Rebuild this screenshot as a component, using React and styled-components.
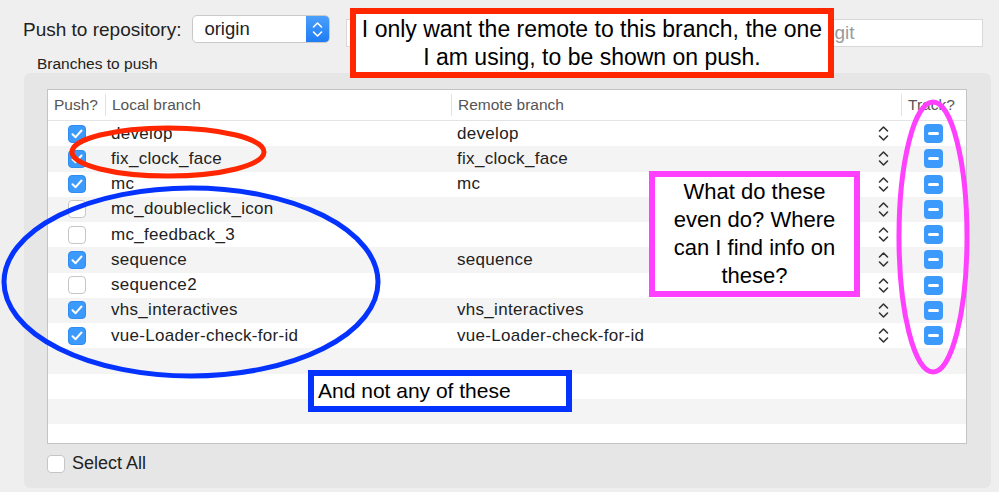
import React from 'react'
import styled, { createGlobalStyle } from 'styled-components'

const Global = createGlobalStyle`
  html, body {
    margin: 0;
    padding: 0;
    background: #efefef;
  }
  body {
    font-family: "Liberation Sans", Arial, sans-serif;
    color: #222;
  }
`

const Window = styled.div`
  position: relative;
  width: 999px;
  height: 492px;
  overflow: hidden;
  background: #efefef;
  padding: 15px 16px 0 23px;
  box-sizing: border-box;
`

const TopRow = styled.div`
  display: flex;
  align-items: flex-start;
  height: 31px;
`

const Label = styled.div`
  font-size: 19px;
  line-height: 30px;
  color: #222;
  margin-right: 11px;
`

const Popup = styled.div`
  display: flex;
  width: 138px;
  height: 28px;
  box-sizing: border-box;
  border: 1px solid #c9c9c9;
  border-radius: 5px;
  background: #fff;
  overflow: hidden;
`

const PopupText = styled.div`
  flex: 1;
  font-size: 18.5px;
  padding-left: 11px;
  line-height: 26px;
`

const PopupArrows = styled.div`
  width: 23px;
  background: linear-gradient(#4aa0fb, #1f7cf4);
  display: flex;
  align-items: center;
  justify-content: center;
`

const TextField = styled.div`
  flex: 1;
  height: 28px;
  margin-left: 16px;
  margin-top: 4px;
  box-sizing: border-box;
  border: 1px solid #d8d8d8;
  background: #fff;
  font-size: 19px;
  color: #9a9a9a;
  padding-left: 487px;
  line-height: 26px;
`

const GroupTitle = styled.div`
  font-size: 15.5px;
  margin: 10px 0 0 14px;
  height: 17px;
  line-height: 16px;
`

const Group = styled.div`
  margin-left: 1px;
  width: 967px;
  height: 415px;
  box-sizing: border-box;
  background: #e6e6e6;
  border-radius: 6px;
  padding: 16px 24px 0 23px;
`

const Table = styled.div`
  height: 355px;
  box-sizing: border-box;
  border: 1px solid #c4c4c4;
  background: #fff;
  overflow: hidden;
`

const cols = '57px 346px 450px 1fr'

const HeaderRow = styled.div`
  display: grid;
  grid-template-columns: ${cols};
  height: 31px;
  border-bottom: 1px solid #e4e4e4;
  box-sizing: border-box;
`

const HeaderCell = styled.div`
  font-size: 15.5px;
  color: #555;
  display: flex;
  align-items: center;
  padding-left: 6px;
  border-left: ${p => (p.$first ? 'none' : '1px solid #e2e2e2')};
  margin: 4px 0;
  white-space: nowrap;
  overflow: hidden;
`

const Row = styled.div`
  display: grid;
  grid-template-columns: ${cols};
  height: 25.25px;
  background: ${p => (p.$odd ? '#f4f4f4' : '#fff')};
  font-size: 17px;
  letter-spacing: 0.3px;
  color: #222;
`

const Cell = styled.div`
  display: flex;
  align-items: center;
  justify-content: ${p => p.$center ? 'center' : 'flex-start'};
  padding-left: ${p => (p.$center ? '0' : '6px')};
  white-space: nowrap;
`

const RemoteCell = styled(Cell)`
  justify-content: space-between;
  padding-right: 12px;
`

const Box = styled.div`
  width: 18px;
  height: 18px;
  box-sizing: border-box;
  border-radius: 4px;
  background: ${p => (p.$on ? '#3c9afc' : '#fff')};
  border: 1px solid ${p => (p.$on ? '#2e8cf2' : '#c6c6c6')};
  display: flex;
  align-items: center;
  justify-content: center;
`

const Minus = styled.div`
  width: 19px;
  height: 19px;
  border-radius: 4px;
  background: #3c9afc;
  display: flex;
  align-items: center;
  justify-content: center;
  &::after {
    content: '';
    width: 11px;
    height: 3px;
    border-radius: 1.5px;
    background: #fff;
  }
`

const Footer = styled.div`
  display: flex;
  align-items: center;
  gap: 7px;
  margin-top: 9px;
  font-size: 18px;
  color: #222;
`

const Note = styled.div`
  position: absolute;
  left: ${p => p.$x}px;
  top: ${p => p.$y}px;
  width: ${p => p.$w}px;
  height: ${p => p.$h}px;
  box-sizing: border-box;
  border: 6px solid ${p => p.$color};
  background: #fff;
  color: #000;
  font-family: "Liberation Sans", Arial, sans-serif;
  font-size: ${p => p.$size}px;
  line-height: 28px;
  text-align: ${p => p.$align || 'center'};
  display: flex;
  flex-direction: column;
  justify-content: center;
  padding: 0 4px;
`

const Marks = styled.svg`
  position: absolute;
  left: 0;
  top: 0;
  pointer-events: none;
`

const Check = () => (
  <svg width="12" height="10" viewBox="0 0 12 10">
    <path d="M1.5 5.2 L4.6 8.2 L10.5 1.5" fill="none" stroke="#fff" strokeWidth="2" strokeLinecap="round" strokeLinejoin="round" />
  </svg>
)

const Stepper = ({ color = '#333' }) => (
  <svg width="11" height="17" viewBox="0 0 11 17">
    <path d="M1.5 6 L5.5 2 L9.5 6 M1.5 11 L5.5 15 L9.5 11" fill="none" stroke={color} strokeWidth="1.6" strokeLinecap="round" strokeLinejoin="round" />
  </svg>
)

const branches = [
  { name: 'develop', remote: 'develop', on: true },
  { name: 'fix_clock_face', remote: 'fix_clock_face', on: true },
  { name: 'mc', remote: 'mc', on: true },
  { name: 'mc_doubleclick_icon', remote: '', on: false },
  { name: 'mc_feedback_3', remote: '', on: false },
  { name: 'sequence', remote: 'sequence', on: true },
  { name: 'sequence2', remote: '', on: false },
  { name: 'vhs_interactives', remote: 'vhs_interactives', on: true },
  { name: 'vue-Loader-check-for-id', remote: 'vue-Loader-check-for-id', on: true },
]

const App = () => {
  const empty = 4
  return (
    <Window>
      <Global />
      <TopRow>
        <Label>Push to repository:</Label>
        <Popup>
          <PopupText>origin</PopupText>
          <PopupArrows>
            <Stepper color="#fff" />
          </PopupArrows>
        </Popup>
        <TextField>git</TextField>
      </TopRow>
      <GroupTitle>Branches to push</GroupTitle>
      <Group>
        <Table>
          <HeaderRow>
            <HeaderCell $first>Push?</HeaderCell>
            <HeaderCell>Local branch</HeaderCell>
            <HeaderCell>Remote branch</HeaderCell>
            <HeaderCell>Track?</HeaderCell>
          </HeaderRow>
          {branches.map((b, i) => (
            <Row key={b.name} $odd={i % 2 === 1}>
              <Cell $center>
                <Box $on={b.on}>{b.on && <Check />}</Box>
              </Cell>
              <Cell>{b.name}</Cell>
              <RemoteCell>
                <span>{b.remote}</span>
                <Stepper />
              </RemoteCell>
              <Cell $center>
                <Minus />
              </Cell>
            </Row>
          ))}
          {Array.from({ length: empty }).map((_, i) => (
            <Row key={'e' + i} $odd={(branches.length + i) % 2 === 1} />
          ))}
        </Table>
        <Footer>
          <Box />
          Select All
        </Footer>
      </Group>

      <Marks width="999" height="492" viewBox="0 0 999 492">
        <ellipse cx="168" cy="152" rx="96" ry="24" fill="none" stroke="#ff2600" strokeWidth="5" />
        <ellipse cx="191" cy="282" rx="187" ry="94" fill="none" stroke="#0433ff" strokeWidth="5" />
        <ellipse cx="933" cy="237" rx="34" ry="135" fill="none" stroke="#ff40ff" strokeWidth="5" />
      </Marks>

      <Note $x={350} $y={8} $w={484} $h={70} $color="#ff2600" $size={23}>
        <div>I only want the remote to this branch, the one</div>
        <div>I am using, to be shown on push.</div>
      </Note>
      <Note $x={649} $y={171} $w={211} $h={126} $color="#ff40ff" $size={22}>
        <div>What do these</div>
        <div>even do? Where</div>
        <div>can I find info on</div>
        <div>these?</div>
      </Note>
      <Note $x={308} $y={370} $w={264} $h={42} $color="#0433ff" $size={21} $align="left">
        <div>And not any of these</div>
      </Note>
    </Window>
  )
}

export default App
